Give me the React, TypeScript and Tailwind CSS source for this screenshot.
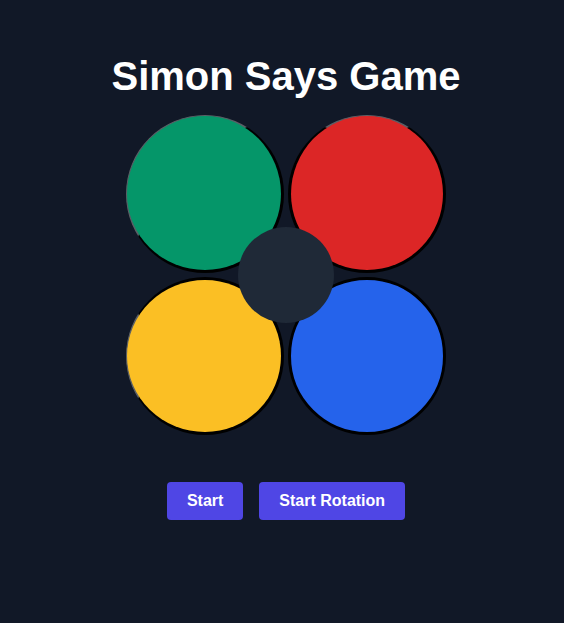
const pads = [
  {
    name: "green",
    cls: "bg-[#059669] border-t-[1px] border-l-[1px] border-r-[3px] border-b-[3px] border-t-[#5b5f66] border-l-[#5b5f66] border-r-black border-b-black",
  },
  {
    name: "red",
    cls: "bg-[#dc2626] border-t-[1px] border-l-[3px] border-r-[3px] border-b-[3px] border-t-[#5b5f66] border-l-black border-r-black border-b-black",
  },
  {
    name: "yellow",
    cls: "bg-[#fbbf24] border-l-[1px] border-t-[3px] border-r-[3px] border-b-[3px] border-l-[#5b5f66] border-t-black border-r-black border-b-black",
  },
  {
    name: "blue",
    cls: "bg-[#2563eb] border-[3px] border-black",
  },
];

const App = () => {
  return (
    <div
      className="min-h-[623px] w-full bg-[#111827] pl-2 pt-[52px] flex flex-col items-center"
      style={{ fontFamily: '"Liberation Sans", Arial, sans-serif' }}
    >
      <h1 className="text-[40px] leading-[48px] font-bold text-white">Simon Says Game</h1>

      <div className="relative mt-[15px] grid grid-cols-2 gap-1">
        {pads.map((p) => (
          <div key={p.name} className={`w-[158px] h-[158px] rounded-full ${p.cls}`} />
        ))}
        <div className="absolute left-1/2 top-1/2 -translate-x-1/2 -translate-y-1/2 w-24 h-24 rounded-full bg-[#1f2937]" />
      </div>

      <div className="mt-[47px] flex gap-4">
        <button className="bg-[#4f46e5] text-white font-bold text-base leading-6 px-5 py-[7px] rounded">
          Start
        </button>
        <button className="bg-[#4f46e5] text-white font-bold text-base leading-6 px-5 py-[7px] rounded">
          Start Rotation
        </button>
      </div>
    </div>
  );
};

export default App;
